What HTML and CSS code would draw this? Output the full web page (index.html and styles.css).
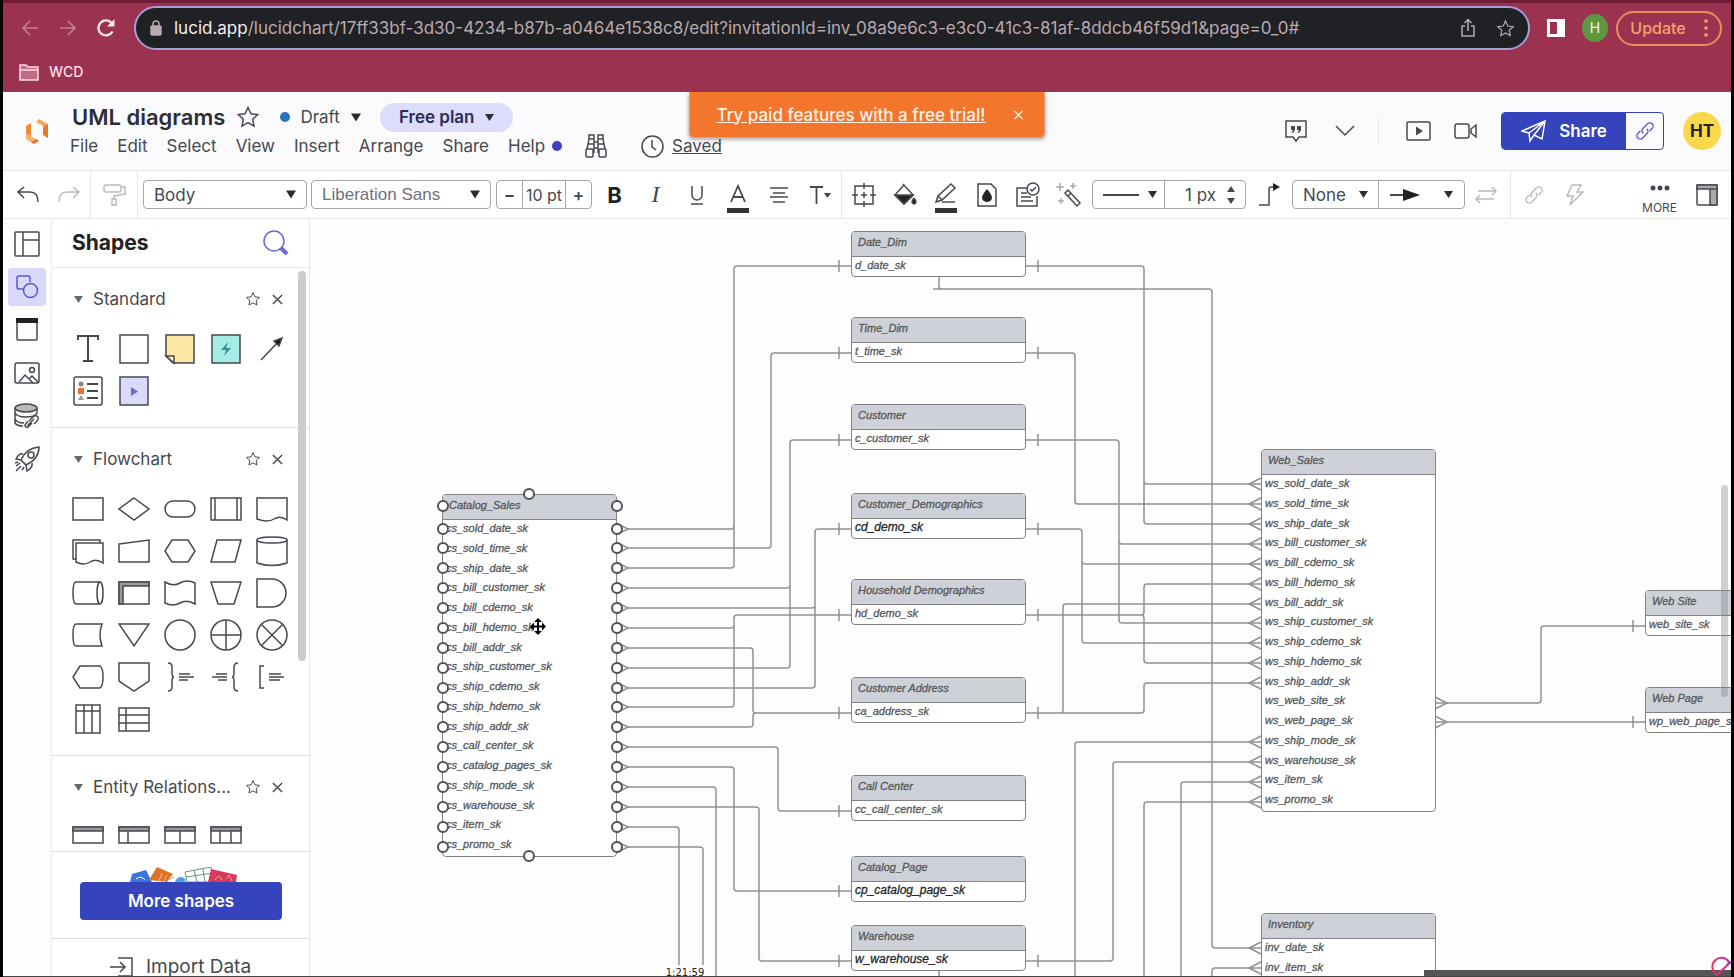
FILE: index.html
```html
<!DOCTYPE html>
<html lang="en">
<head>
<meta charset="utf-8">
<title>UML diagrams: Lucidchart</title>
<link rel="stylesheet" href="styles.css">
</head>
<body>
<svg class="defs" aria-hidden="true">
  <symbol id="star" viewBox="0 0 24 24"><path d="M12 2.500l2.900 6.300 6.800.8-5 4.700 1.300 6.800-6-3.400-6 3.400 1.300-6.800-5-4.700 6.800-.8z"/></symbol>
  <symbol id="cross" viewBox="0 0 12 12"><path d="M1 1l10 10M11 1L1 11"/></symbol>
  <symbol id="caret" viewBox="0 0 10 8"><path d="M0 0h10L5 8z" fill="currentColor" stroke="none"/></symbol>
  <symbol id="link" viewBox="0 0 24 24"><path d="M10 14.500c-1.800-1.800-1.600-4 0-5.600l4.500-4.500c1.600-1.600 4-1.600 5.300-.2 1.400 1.400 1.400 3.700-.2 5.300l-2.600 2.600M14 9.500c1.800 1.800 1.600 4 0 5.600l-4.500 4.500c-1.600 1.600-4 1.600-5.300.2-1.400-1.400-1.400-3.700.2-5.300l2.600-2.600"/></symbol>
</svg>

<div class="browser">
  <div class="navbar">
    <button class="nav dim" aria-label="Back"><svg width="18" height="16" viewBox="0 0 18 16"><path d="M17 8H2M9 1L2 8l7 7"/></svg></button>
    <button class="nav dim" aria-label="Forward"><svg width="18" height="16" viewBox="0 0 18 16"><path d="M1 8h15M9 1l7 7-7 7"/></svg></button>
    <button class="nav" aria-label="Reload"><svg width="20" height="20" viewBox="0 0 20 20"><path d="M16.500 13.500A7.500 7.500 0 1 1 16 5.500" stroke-width="2.400"/><path d="M18.500 1v7.500H11z" fill="currentColor" stroke="none"/></svg></button>
    <div class="omnibox">
      <svg class="lock" width="12" height="16" viewBox="0 0 12 16"><rect x="1" y="6" width="10" height="9" rx="1" fill="currentColor"/><path d="M3 6V4a3 3 0 0 1 6 0v2"/></svg>
      <label for="url">lucid.app</label>
      <input id="url" type="text" value="/lucidchart/17ff33bf-3d30-4234-b87b-a0464e1538c8/edit?invitationId=inv_08a9e6c3-e3c0-41c3-81af-8ddcb46f59d1&amp;page=0_0#">
      <button aria-label="Share page"><svg width="16" height="20" viewBox="0 0 16 20"><path d="M5 8H2v10h12V8h-3M8 13V2M4.500 5L8 1.500 11.500 5"/></svg></button>
      <button aria-label="Bookmark"><svg width="19" height="19"><use href="#star"/></svg></button>
    </div>
    <button class="sidepanel" aria-label="Side panel"><svg width="18" height="18" viewBox="0 0 18 18"><path fill="#fff" stroke="none" d="M0 0h18v18H0zM3 3v12h7V3z" fill-rule="evenodd"/></svg></button>
    <span class="profile">H</span>
    <button class="update">Update<svg width="4" height="18" viewBox="0 0 4 18" class="solid"><circle cx="2" cy="2" r="1.800"/><circle cx="2" cy="9" r="1.800"/><circle cx="2" cy="16" r="1.800"/></svg></button>
  </div>
  <div class="bookmarks">
    <a href="#"><svg width="20" height="18" viewBox="0 0 20 18"><path d="M1 16V2h6l2 2h10v13H1z" fill="#bf6c87"/><path d="M1 7h18" /></svg>WCD</a>
  </div>
</div>

<header class="apphead">
  <svg class="logo" width="24" height="26" viewBox="0 0 24 26"><path d="M1 7l5-3v13l-5-2z" fill="#f08a3c"/><path d="M1 15l5 2 6 4-3 4-8-5z" fill="#f7b36a"/><path d="M9 25l-3-2 6-3 2 2z" fill="#e8752a"/><path d="M11 3l3-3 9 5-2 4z" fill="#f7a95c"/><path d="M18 8l5-3v14l-5-3z" fill="#ec7628"/></svg>
  <div class="doc">
    <div class="titlerow">
      <h1>UML diagrams</h1>
      <button class="fav" aria-label="Favorite"><svg width="24" height="24"><use href="#star"/></svg></button>
      <button class="draft"><i class="dot"></i>Draft<svg class="car" width="10" height="9"><use href="#caret"/></svg></button>
      <button class="plan">Free plan<svg class="car" width="9" height="9"><use href="#caret"/></svg></button>
    </div>
    <nav class="menus">
      <button>File</button><button>Edit</button><button>Select</button><button>View</button><button>Insert</button><button>Arrange</button><button>Share</button><button class="help">Help<i class="dot"></i></button>
      <button class="find" aria-label="Find"><svg width="22" height="24" viewBox="0 0 22 24"><rect x="1" y="15" width="7" height="8" rx="1"/><rect x="14" y="15" width="7" height="8" rx="1"/><path d="M2 15L4 5h5v14M20 15L18 5h-5v14M4 5V1h5v4M13 5V1h5v4M9 8h4M9 14h4M3 10h6M13 10h6"/></svg></button>
      <span class="saved"><svg width="23" height="23" viewBox="0 0 23 23"><circle cx="11.500" cy="11.500" r="10.500"/><path d="M11 5v7l4 3"/></svg><a href="#">Saved</a></span>
    </nav>
  </div>
  <div class="actions">
    <button class="comments" aria-label="Comments"><svg width="24" height="24" viewBox="0 0 24 24"><path d="M2 2h20v16h-7l-3 4-3-4H2z"/><path d="M7 7h4v3q0 3-3 4l-.5-1q1.500-1 1.500-2H7zM13 7h4v3q0 3-3 4l-.5-1q1.500-1 1.500-2h-2z" fill="currentColor" stroke="none"/></svg></button>
    <button aria-label="Expand comments"><svg width="20" height="12" viewBox="0 0 20 12"><path d="M1 1l9 9 9-9"/></svg></button>
    <i class="vsep"></i>
    <button aria-label="Present"><svg width="25" height="20" viewBox="0 0 25 20"><rect x="1" y="1" width="23" height="18" rx="1"/><path d="M10 5.500v9l7-4.500z" fill="currentColor" stroke="none"/></svg></button>
    <button aria-label="Video call"><svg width="24" height="18" viewBox="0 0 24 18"><rect x="1" y="2" width="14" height="14" rx="2"/><path d="M17 7l5-4v12l-5-4z"/></svg></button>
    <div class="sharebox">
      <button class="share"><svg width="26" height="24" viewBox="0 0 26 24"><path d="M1 12L24 2l-3 18-8-4-4 6-1-8zM24 2L8 14M24 2L13 16M8 14l1 8"/></svg>Share</button>
      <button class="copy" aria-label="Copy link"><svg width="22" height="24"><use href="#link"/></svg></button>
    </div>
    <span class="avatar">HT</span>
  </div>
  <div class="banner"><a href="#">Try paid features with a free trial!</a><button aria-label="Dismiss"><svg width="10" height="10"><use href="#cross"/></svg></button></div>
</header>

<div class="toolbar">
  <button class="t" aria-label="Undo"><svg width="22" height="18" viewBox="0 0 22 18"><path d="M7 1L1 6l6 6M1 6h12q8 0 8 10"/></svg></button>
  <button class="t off" aria-label="Redo"><svg width="22" height="18" viewBox="0 0 22 18"><path d="M15 1l6 5-6 6M21 6H9Q1 6 1 16"/></svg></button>
  <i class="vsep"></i>
  <button class="t roller off" aria-label="Format painter"><svg width="23" height="24" viewBox="0 0 23 24"><rect x="1" y="2" width="17" height="7" rx="2"/><path d="M18 4h4v7l-11 2v4M9 16h4v6H9z"/></svg></button>
  <i class="vsep"></i>
  <div class="pick style"><select aria-label="Text style"><option>Body</option></select><svg class="car" width="10" height="9"><use href="#caret"/></svg></div>
  <div class="pick font"><select aria-label="Font"><option>Liberation Sans</option></select><svg class="car" width="10" height="9"><use href="#caret"/></svg></div>
  <div class="size"><button aria-label="Smaller">−</button><input aria-label="Font size" type="text" value="10 pt"><button aria-label="Larger">+</button></div>
  <button class="t bold">B</button>
  <button class="t ital">I</button>
  <button class="t" aria-label="Underline"><svg width="16" height="22" viewBox="0 0 16 22" stroke-width="1.800"><path d="M3 2v9a5 5 0 0 0 10 0V2M2 20h12"/></svg></button>
  <button class="t" aria-label="Text color"><svg width="22" height="36" viewBox="0 0 22 36"><path d="M4 25L11 9l7 16M7 20h8" stroke-width="1.800"/><path d="M0 31h22v5H0z" fill="#333" stroke="none"/></svg></button>
  <button class="t" aria-label="Align"><svg width="20" height="18" viewBox="0 0 20 18"><path d="M1 2h18M4 7h12M1 11h18M4 16h12"/></svg></button>
  <button class="t" aria-label="Text options"><svg width="22" height="20" viewBox="0 0 22 20"><path d="M1 2h13M7.500 2v17" stroke-width="1.800"/><path d="M15 8h7l-3.500 5z" fill="currentColor" stroke="none"/></svg></button>
  <i class="vsep"></i>
  <button class="t" aria-label="Frame"><svg width="24" height="24" viewBox="0 0 24 24"><rect x="3" y="3" width="18" height="18"/><path d="M12 0v6M12 18v6M0 12h6M18 12h6M9 12h6M12 9v6"/></svg></button>
  <button class="t" aria-label="Fill"><svg width="24" height="24" viewBox="0 0 24 24"><path d="M10 1l10 11-9 9-9-9 9-10"/><path d="M2 12h18l-9 9zM21 15q4 5 0 6-4-1 0-6" fill="#222"/></svg></button>
  <button class="t" aria-label="Line color"><svg width="24" height="36" viewBox="0 0 24 36"><path d="M2 25l2-6L17 7l4 4L8 23zM4 19l4 4M8 25h13"/><path d="M1 31h22v5H1z" fill="#333" stroke="none"/></svg></button>
  <button class="t" aria-label="Opacity"><svg width="20" height="24" viewBox="0 0 20 24"><path d="M1 1h13l5 5v17H1z"/><path d="M10 6q8 9 3 12-3 2-6 0-5-3 3-12" fill="#222" stroke="none"/></svg></button>
  <button class="t" aria-label="Rules"><svg width="24" height="26" viewBox="0 0 24 26"><path d="M12 6H1v18h20V14M5 11h6M5 15h10M5 19h12"/><circle cx="17" cy="7" r="6"/><path d="M14 7l2 2 4-4"/></svg></button>
  <button class="t" aria-label="Smart format"><svg width="26" height="26" viewBox="0 0 26 26"><path d="M9 11l3-3 12 13-3 3zM12 14l3-3"/><path d="M4 1v8M0 5h8M17 1v6M14 4h6M5 16v6M2 19h6" stroke="#aaa"/></svg></button>
  <div class="pair line"><button aria-label="Line style"><svg width="36" height="2"><path d="M0 1h36" stroke-width="2"/></svg><svg class="car" width="9" height="9"><use href="#caret"/></svg></button><label><input aria-label="Line width" type="text" value="1 px"><svg width="8" height="18" viewBox="0 0 8 18" class="solid"><path d="M0 6h8L4 0zM0 12h8l-4 6z"/></svg></label></div>
  <button class="t elbow" aria-label="Line shape"><svg width="21" height="24" viewBox="0 0 21 24"><path d="M0 22h10V6q0-2 2-2h3"/><path d="M14 0l7 4-7 4z" fill="#222" stroke="none"/></svg></button>
  <div class="pair ends"><div class="pick"><select aria-label="Line start"><option>None</option></select><svg class="car" width="9" height="9"><use href="#caret"/></svg></div><button aria-label="Line end"><svg width="30" height="12" viewBox="0 0 30 12"><path d="M0 6h16" stroke-width="2"/><path d="M13 0l17 6-17 6z" fill="#222" stroke="none"/></svg><svg class="car" width="9" height="9"><use href="#caret"/></svg></button></div>
  <button class="t off" aria-label="Swap ends"><svg width="22" height="16" viewBox="0 0 22 16"><path d="M3 4h18M17 0l4 4-4 4M19 12H1M5 8l-4 4 4 4"/></svg></button>
  <i class="vsep last"></i>
  <button class="t off" aria-label="Link"><svg width="22" height="22"><use href="#link"/></svg></button>
  <button class="t off" aria-label="Actions"><svg width="18" height="22" viewBox="0 0 18 22"><path d="M6 1h9l-4 7h6L4 21l3-9H1z"/></svg></button>
  <button class="more"><svg width="20" height="6" viewBox="0 0 20 6" class="solid"><circle cx="3" cy="3" r="2.500"/><circle cx="10" cy="3" r="2.500"/><circle cx="17" cy="3" r="2.500"/></svg>MORE</button>
  <button class="dock" aria-label="Toggle panel"><svg width="22" height="22" viewBox="0 0 22 22"><rect x="1" y="1" width="20" height="20" rx="1"/><path d="M1 1h20v4H1zM14 5h7v16h-7z" fill="#aaa"/></svg></button>
</div>

<main class="work">
  <nav class="rail">
    <button aria-label="Templates"><svg width="26" height="26" viewBox="0 0 26 26"><rect x="1" y="1" width="24" height="24" rx="1"/><path d="M9 1v24M9 9h16"/></svg></button>
    <button class="on" aria-label="Shapes"><svg width="24" height="24" viewBox="0 0 24 24"><path d="M8 14H4a2 2 0 0 1-2-2V3a2 2 0 0 1 2-2h9a2 2 0 0 1 2 2v4"/><circle cx="15.500" cy="15.500" r="7"/></svg></button>
    <button aria-label="Containers"><svg width="22" height="24" viewBox="0 0 22 24"><rect x="1" y="1" width="20" height="21" rx="1"/><path d="M0 0h22v5H0z" fill="#222" stroke="none"/></svg></button>
    <button aria-label="Images"><svg width="26" height="22" viewBox="0 0 26 22"><rect x="1" y="1" width="24" height="20" rx="2"/><circle cx="18" cy="8" r="2.500"/><path d="M5 20l6-7 8 8M15 17l3-3 6 6"/></svg></button>
    <button aria-label="Data"><svg width="26" height="26" viewBox="0 0 26 26"><ellipse cx="12" cy="5" rx="11" ry="4" fill="#bbb"/><path d="M1 5v5q2 4 11 4t11-4V5M1 10v6q2 4 9 4M1 16v4q2 3 8 3"/><path d="M15 18l5-5q3-1 4 1t-1 4l-3 3M20 16l-5 5q-2 2 0 3M18 20l-4 4q-3 1-3-2l3-4"/></svg></button>
    <button aria-label="What's new"><svg width="26" height="26" viewBox="0 0 26 26"><path d="M7 14Q12 2 25 1q0 12-13 18zM7 14l5 5"/><circle cx="17" cy="9" r="3"/><path d="M9 8q-4-1-7 5l5 1M18 17q1 4-5 8l-1-6M6 17l-4 3M7 20l-5 5M4 16l-3 1M10 21l-2 3"/></svg></button>
  </nav>

  <aside class="panel">
    <div class="phead"><h2>Shapes</h2><button aria-label="Search shapes"><svg width="26" height="26" viewBox="0 0 26 26"><circle cx="11" cy="11" r="10"/><path d="M18 18l6 6" stroke-width="4"/></svg></button></div>
    <div class="scroll">
      <section>
        <div class="shead"><svg class="car" width="9" height="7"><use href="#caret"/></svg><h3>Standard</h3><button aria-label="Favorite Standard"><svg width="16" height="16"><use href="#star"/></svg></button><button aria-label="Close Standard"><svg width="11" height="11"><use href="#cross"/></svg></button></div>
        <div class="shapes">
          <svg viewBox="0 0 32 32"><path d="M6 7V3h20v4M16 3v24M11 28h10" stroke-width="2"/></svg>
          <svg viewBox="0 0 32 32"><path d="M2 2h28v28H2z"/></svg>
          <svg viewBox="0 0 32 32"><path d="M2 2h28v28H9l-7-7z" fill="#fbe8a6"/><path d="M2 23h8v7z" fill="#fff4c4"/></svg>
          <svg viewBox="0 0 32 32"><path d="M2 2h28v28H2z" fill="#a5ece6"/><path d="M18 9l-7 8h5l-2 6 7-8h-5z" fill="#3c8f92" stroke="none"/></svg>
          <svg viewBox="0 0 32 32"><path d="M5 27L22 9"/><path d="M26 5l-3 8-5-5z" fill="#111"/></svg>
          <svg viewBox="0 0 32 32"><rect x="2" y="2" width="28" height="28" rx="2"/><path d="M15 9h11M15 16h11M15 23h11" stroke-width="2"/><circle cx="9" cy="9" r="2.500" fill="#888" stroke="none"/><path d="M6 13h6v6H6z" fill="#e8702c" stroke="none"/><path d="M9 20l3 5H6z" fill="#999" stroke="none"/></svg>
          <svg viewBox="0 0 32 32"><path d="M2 2h28v28H2z" fill="#dadafb"/><path d="M13 12v9l7-4.500z" fill="#6c6ae0" stroke="none"/></svg>
        </div>
      </section>
      <section>
        <div class="shead"><svg class="car" width="9" height="7"><use href="#caret"/></svg><h3>Flowchart</h3><button aria-label="Favorite Flowchart"><svg width="16" height="16"><use href="#star"/></svg></button><button aria-label="Close Flowchart"><svg width="11" height="11"><use href="#cross"/></svg></button></div>
        <div class="shapes">
          <svg viewBox="0 0 32 32"><path d="M1 5h30v22H1z"/></svg>
          <svg viewBox="0 0 32 32"><path d="M16 5l15 11-15 11L1 16z"/></svg>
          <svg viewBox="0 0 32 32"><rect x="1" y="8" width="30" height="16" rx="8"/></svg>
          <svg viewBox="0 0 32 32"><path d="M1 5h30v22H1zM5 5v22M27 5v22"/></svg>
          <svg viewBox="0 0 32 32"><path d="M1 5h30v22q-7-5-13-1t-17 0z"/></svg>
          <svg viewBox="0 0 32 32"><path d="M4 8h27v20q-7-5-13-1t-14 0zM4 24H1V5h27v3"/></svg>
          <svg viewBox="0 0 32 32"><path d="M1 9l30-4v22H1z"/></svg>
          <svg viewBox="0 0 32 32"><path d="M8 5h16l7 11-7 11H8L1 16z"/></svg>
          <svg viewBox="0 0 32 32"><path d="M7 5h24l-6 22H1z"/></svg>
          <svg viewBox="0 0 32 32"><ellipse cx="16" cy="5" rx="15" ry="3"/><path d="M1 5v23q15 5 30 0V5"/></svg>
          <svg viewBox="0 0 32 32"><path d="M28 5H4q-3 0-3 11t3 11h24"/><ellipse cx="28" cy="16" rx="3" ry="11"/></svg>
          <svg viewBox="0 0 32 32"><path d="M1 5h30v22H1z"/><path d="M1 5h30v4H5v18H1z" fill="#999"/></svg>
          <svg viewBox="0 0 32 32"><path d="M1 5q8 5 15 1t15 0v21q-8-5-15-1t-15 0z"/></svg>
          <svg viewBox="0 0 32 32"><path d="M1 5h30l-7 22H8z"/></svg>
          <svg viewBox="0 0 32 32"><path d="M1 2h15a14 14 0 0 1 0 28H1z"/></svg>
          <svg viewBox="0 0 32 32"><path d="M30 5H4q-3 0-3 11t3 11h26q-4-11 0-22z"/></svg>
          <svg viewBox="0 0 32 32"><path d="M1 5h30L16 27z"/></svg>
          <svg viewBox="0 0 32 32"><circle cx="16" cy="16" r="15"/></svg>
          <svg viewBox="0 0 32 32"><circle cx="16" cy="16" r="15"/><path d="M16 1v30M1 16h30"/></svg>
          <svg viewBox="0 0 32 32"><circle cx="16" cy="16" r="15"/><path d="M6 6l20 20M26 6L6 26"/></svg>
          <svg viewBox="0 0 32 32"><path d="M8 5h20q3 2 3 11t-3 11H8L1 16z"/></svg>
          <svg viewBox="0 0 32 32"><path d="M1 2h30v18L16 30 1 20z"/></svg>
          <svg viewBox="0 0 32 32"><path d="M4 2q4 0 4 4v6q0 4 2 4-2 0-2 4v6q0 4-4 4M15 13h11M15 16h15M15 19h9"/></svg>
          <svg viewBox="0 0 32 32"><path d="M28 2q-4 0-4 4v6q0 4-2 4 2 0 2 4v6q0 4 4 4M6 13h11M2 16h15M8 19h9"/></svg>
          <svg viewBox="0 0 32 32"><path d="M8 5H4v22h4M13 13h12M13 16h15M13 19h11"/></svg>
          <svg viewBox="0 0 32 32"><path d="M4 2h24v28H4zM4 8h24M12 2v28M20 2v28"/></svg>
          <svg viewBox="0 0 32 32"><path d="M1 5h30v23H1zM1 12h30M1 20h30M8 5v23"/></svg>
        </div>
      </section>
      <section class="er">
        <div class="shead"><svg class="car" width="9" height="7"><use href="#caret"/></svg><h3>Entity Relations...</h3><button aria-label="Favorite Entity Relationship"><svg width="16" height="16"><use href="#star"/></svg></button><button aria-label="Close Entity Relationship"><svg width="11" height="11"><use href="#cross"/></svg></button></div>
        <div class="shapes">
          <svg viewBox="0 0 32 32"><path d="M1 8h30v16H1z"/><path d="M1 8h30v4H1z" fill="#999"/></svg>
          <svg viewBox="0 0 32 32"><path d="M1 8h30v16H1zM10 12v12"/><path d="M1 8h30v4H1z" fill="#999"/></svg>
          <svg viewBox="0 0 32 32"><path d="M1 8h30v16H1zM16 12v12"/><path d="M1 8h30v4H1z" fill="#999"/></svg>
          <svg viewBox="0 0 32 32"><path d="M1 8h30v16H1zM10 12v12M21 12v12"/><path d="M1 8h30v4H1z" fill="#999"/></svg>
        </div>
      </section>
      <i class="thumb"></i>
    </div>
    <div class="moreshapes">
      <svg width="108" height="15" viewBox="0 0 108 15"><path d="M1 15l2-8 14-4 6 12z" fill="#3d73de"/><path d="M7 12q5-4 9 1" stroke="#fff"/><path d="M20 13L28 0l16 7-6 8z" fill="#dd7328"/><path d="M30 14l3-8M35 14l3-6" stroke="#f5c089"/><path d="M40 13l5-3M46 15q4-8 10-3v3z" stroke="#7ab8e0" fill="#3d9fe0"/><path d="M56 5l26-5 3 15H58zM65 3l3 12M74 2l2 13M57 10l27-4" stroke="#6c9080"/><path d="M82 2l26 6-1 7H79z" fill="#d83a5c"/><path d="M86 13q4-7 7 0M97 12l3-4 3 6" stroke="#f5a0b0"/></svg>
      <button>More shapes</button>
    </div>
    <button class="import"><svg width="23" height="22" viewBox="0 0 23 22"><path d="M8 2h14v18H8M0 11h15M10 6l5 5-5 5"/></svg>Import Data</button>
  </aside>

  <div class="canvas">
    <svg class="wires" width="1421" height="758" viewBox="310 219 1421 758">
      <path d="M628 529H731q3 0 3-3M628 548H768q3 0 3-3V356q0-3 3-3H852M628 568H731q3 0 3-3V269q0-3 3-3H852"/>
      <path d="M628 588H787q3 0 3-3M628 668H787q3 0 3-3V443q0-3 3-3H852"/>
      <path d="M628 608H812q3 0 3-3M628 688H812q3 0 3-3V532q0-3 3-3H852"/>
      <path d="M628 628H731q3 0 3-3M628 707H731q3 0 3-3V618q0-3 3-3H852"/>
      <path d="M628 648H750q3 0 3 3V710q0 3 3 3H852M628 727H750q3 0 3-3V716q0-3 3-3"/>
      <path d="M628 747H775q3 0 3 3V808q0 3 3 3H852"/>
      <path d="M628 767H731q3 0 3 3V888q0 3 3 3H852"/>
      <path d="M628 787H713q3 0 3 3V977"/>
      <path d="M628 807H756q3 0 3 3V958q0 3 3 3H852"/>
      <path d="M628 827H676q3 0 3 3V977M628 847H700q3 0 3 3V977"/>
      <path d="M1026 266H1141q3 0 3 3V481q0 3 3 3H1261M1144 481V521q0 3 3 3H1261"/>
      <path d="M939 276v10q0 3 3 3H1209q3 0 3 3V945q0 3 3 3H1261M933 289h12"/>
      <path d="M1026 353H1072q3 0 3 3V501q0 3 3 3H1261"/>
      <path d="M1026 440H1116q3 0 3 3V541q0 3 3 3H1261M1119 541V620q0 3 3 3H1261"/>
      <path d="M1026 529H1079q3 0 3 3V561q0 3 3 3H1261M1082 561V640q0 3 3 3H1261"/>
      <path d="M1026 615H1141q3 0 3-3V587q0-3 3-3H1261M1141 615q3 0 3 3V660q0 3 3 3H1261"/>
      <path d="M1026 713H1060q3 0 3-3V607q0-3 3-3H1261M1060 713H1141q3 0 3-3V686q0-3 3-3H1261"/>
      <path d="M1261 742H1078q-3 0-3 3V977M1026 961H1110q3 0 3-3V765q0-3 3-3H1261"/>
      <path d="M1261 782H1184q-3 0-3 3V977M1261 802H1147q-3 0-3 3V977M1261 968H1215q-3 0-3 3V977M939 971v6"/>
      <path d="M1435 703H1538q3 0 3-3V629q0-3 3-3H1646M1435 722H1646"/>
      <path class="tick" d="M839 260v12M839 347v12M839 434v12M839 523v12M839 609v12M839 707v12M839 805v12M839 885v12M839 955v12M1038 260v12M1038 347v12M1038 434v12M1038 523v12M1038 609v12M1038 707v12M1038 955v12M1633 620v12M1633 716v12"/>
      <g class="feet">
        <path d="M1261 478l-12 6 12 6M1261 498l-12 6 12 6M1261 518l-12 6 12 6M1261 538l-12 6 12 6M1261 558l-12 6 12 6M1261 578l-12 6 12 6M1261 598l-12 6 12 6M1261 617l-12 6 12 6M1261 637l-12 6 12 6M1261 657l-12 6 12 6M1261 677l-12 6 12 6M1261 736l-12 6 12 6M1261 756l-12 6 12 6M1261 776l-12 6 12 6M1261 796l-12 6 12 6M1261 942l-12 6 12 6M1261 962l-12 6 12 6M1435 697l12 6-12 6M1435 716l12 6-12 6"/>
        <path d="M616 523l12 6-12 6M616 542l12 6-12 6M616 562l12 6-12 6M616 582l12 6-12 6M616 602l12 6-12 6M616 622l12 6-12 6M616 642l12 6-12 6M616 662l12 6-12 6M616 682l12 6-12 6M616 701l12 6-12 6M616 721l12 6-12 6M616 741l12 6-12 6M616 761l12 6-12 6M616 781l12 6-12 6M616 801l12 6-12 6M616 821l12 6-12 6M616 841l12 6-12 6"/>
      </g>
    </svg>

    <div class="node mid n-date"><b>Date_Dim</b><ul><li>d_date_sk</li></ul></div>
    <div class="node mid n-time"><b>Time_Dim</b><ul><li>t_time_sk</li></ul></div>
    <div class="node mid n-cust"><b>Customer</b><ul><li>c_customer_sk</li></ul></div>
    <div class="node mid n-cdemo"><b>Customer_Demographics</b><ul class="dark"><li>cd_demo_sk</li></ul></div>
    <div class="node mid n-hdemo"><b>Household Demographics</b><ul><li>hd_demo_sk</li></ul></div>
    <div class="node mid n-addr"><b>Customer Address</b><ul><li>ca_address_sk</li></ul></div>
    <div class="node mid n-call"><b>Call Center</b><ul><li>cc_call_center_sk</li></ul></div>
    <div class="node mid n-page"><b>Catalog_Page</b><ul class="dark"><li>cp_catalog_page_sk</li></ul></div>
    <div class="node mid n-ware"><b>Warehouse</b><ul class="dark"><li>w_warehouse_sk</li></ul></div>
    <div class="node n-web"><b>Web_Sales</b><ul><li>ws_sold_date_sk</li><li>ws_sold_time_sk</li><li>ws_ship_date_sk</li><li>ws_bill_customer_sk</li><li>ws_bill_cdemo_sk</li><li>ws_bill_hdemo_sk</li><li>ws_bill_addr_sk</li><li>ws_ship_customer_sk</li><li>ws_ship_cdemo_sk</li><li>ws_ship_hdemo_sk</li><li>ws_ship_addr_sk</li><li>ws_web_site_sk</li><li>ws_web_page_sk</li><li>ws_ship_mode_sk</li><li>ws_warehouse_sk</li><li>ws_item_sk</li><li>ws_promo_sk</li></ul></div>
    <div class="node n-inv"><b>Inventory</b><ul><li>inv_date_sk</li><li>inv_item_sk</li><li></li></ul></div>
    <div class="node n-site"><b>Web Site</b><ul><li>web_site_sk</li></ul></div>
    <div class="node n-wpage"><b>Web Page</b><ul><li>wp_web_page_sk</li></ul></div>
    <div class="node n-cat"><b>Catalog_Sales</b><ul><li>cs_sold_date_sk</li><li>cs_sold_time_sk</li><li>cs_ship_date_sk</li><li>cs_bill_customer_sk</li><li>cs_bill_cdemo_sk</li><li>cs_bill_hdemo_sk</li><li>cs_bill_addr_sk</li><li>cs_ship_customer_sk</li><li>cs_ship_cdemo_sk</li><li>cs_ship_hdemo_sk</li><li>cs_ship_addr_sk</li><li>cs_call_center_sk</li><li>cs_catalog_pages_sk</li><li>cs_ship_mode_sk</li><li>cs_warehouse_sk</li><li>cs_item_sk</li><li>cs_promo_sk</li></ul></div>

    <svg class="wires handles" width="1421" height="758" viewBox="310 219 1421 758">
      <defs>
        <g id="pair"><circle cx="443" r="5"/><circle cx="617" r="5"/></g>
      </defs>
      <circle cx="529" cy="494" r="5"/><circle cx="529" cy="856" r="5"/>
      <use href="#pair" y="506"/><use href="#pair" y="529"/><use href="#pair" y="548"/><use href="#pair" y="568"/><use href="#pair" y="588"/><use href="#pair" y="608"/><use href="#pair" y="628"/><use href="#pair" y="648"/><use href="#pair" y="668"/><use href="#pair" y="688"/><use href="#pair" y="707"/><use href="#pair" y="727"/><use href="#pair" y="747"/><use href="#pair" y="767"/><use href="#pair" y="787"/><use href="#pair" y="807"/><use href="#pair" y="827"/><use href="#pair" y="847"/>
      <g class="move"><path d="M538 621v11M532 626.500h12" class="bar"/><path d="M538 618l4 4h-8zM538 635l4-4h-8zM530 626.500l4-4v8zM546 626.500l-4-4v8z"/></g>
    </svg>
    <i class="vthumb"></i>
    <i class="hthumb"></i>
    <span class="clock">1:21:59</span>
    <svg class="widget" width="24" height="21" viewBox="0 0 24 21"><defs><linearGradient id="g"><stop stop-color="#f0305c"/><stop offset="1" stop-color="#a040c0"/></linearGradient></defs><path d="M6 19A9 9 0 1 1 19 7Q17 12 10 17l-4 4M10 17L24 4" stroke="url(#g)" stroke-width="2"/></svg>
  </div>
</main>
</body>
</html>
```

FILE: styles.css
```css
* { box-sizing: border-box; }
body {
  margin: 0;
  height: 100vh;
  display: flex;
  flex-direction: column;
  overflow: hidden;
  background: #fff;
  border: solid #000;
  border-width: 0 3px;
  color: #45494f;
  font: 17px/24px Inter, "Liberation Sans", sans-serif;
}
button, input, select { font: inherit; color: inherit; background: none; border: 0; padding: 0; margin: 0; }
button { display: flex; align-items: center; justify-content: center; white-space: nowrap; }
input { min-width: 0; outline: 0; }
a { color: inherit; }
h1, h2, h3, ul { margin: 0; padding: 0; }
svg { display: block; flex: none; fill: none; stroke: currentColor; stroke-width: 1.5; }
svg.solid { fill: currentColor; stroke: none; }
.defs { position: absolute; width: 0; height: 0; }
.car { color: #2a2d33; }
.vsep { flex: none; width: 1px; background: #e6e7ec; }

/* browser chrome */
.browser { flex: none; height: 92px; background: #9b3350; border-top: 3px solid #701c35; color: #fbdde6; }
.navbar { display: flex; align-items: center; height: 50px; padding: 0 9px 0 17px; }
.nav { width: 20px; height: 20px; margin-right: 18px; color: #ffe6ee; stroke-width: 2; }
.nav.dim { color: #c97f96; }
.omnibox {
  flex: 1;
  display: flex;
  align-items: center;
  height: 44px;
  padding: 0 13px 0 14px;
  border: 2px solid #a59fd6;
  border-radius: 22px;
  background: #202124;
  font-size: 17px;
  color: #b9a9b0;
}
.omnibox label { margin-left: 12px; color: #f4eef0; }
.omnibox input { flex: 1; }
.omnibox button { margin-left: 20px; }
.sidepanel { margin: 0 17px; }
.profile { width: 26px; height: 28px; border-radius: 50%; background: #60963f; color: #f3f3e6; font-size: 14px; line-height: 28px; text-align: center; }
.update { height: 35px; width: 106px; margin-left: 8px; gap: 18px; border: 2px solid #ea8e5c; border-radius: 18px; color: #f5a468; font-size: 16px; font-weight: 500; }
.bookmarks { display: flex; padding: 7px 16px; font-size: 14px; font-weight: 500; }
.bookmarks a { display: flex; align-items: center; gap: 10px; text-decoration: none; }

/* document header */
.apphead { position: relative; flex: none; display: flex; height: 78px; padding: 10px 10px 0 22px; background: #fbfbfe; }
.logo { margin: 17px 21px 0 0; stroke: none; }
.titlerow { display: flex; align-items: center; height: 30px; }
h1 { font-size: 22px; line-height: 30px; font-weight: 600; color: #2b2e35; margin-left: 2px; }
.fav { margin-left: 11px; }
.dot { width: 10px; height: 10px; border-radius: 50%; background: #2474bd; }
.draft { margin-left: 20px; }
.draft .dot { margin-right: 10px; }
.draft .car { margin-left: 11px; }
.plan { height: 29px; margin-left: 19px; padding: 0 19px; border-radius: 15px; background: #dedcfb; color: #2c2c58; font-weight: 600; }
.plan .car { margin-left: 10px; }
.menus { display: flex; align-items: center; height: 28px; gap: 19px; }
.help { gap: 7px; }
.help .dot { background: #3f3fc4; }
.find { margin-left: 4px; }
.saved { display: flex; align-items: center; gap: 8px; margin-left: 15px; }
.actions { display: flex; align-items: center; height: 58px; margin-left: auto; }
.actions > button { margin-right: 23px; }
.actions > .comments { margin-right: 27px; }
.actions .vsep { height: 26px; margin-right: 27px; }
.sharebox { display: flex; height: 38px; border: 1px solid #3543bd; border-radius: 4px; overflow: hidden; }
.share { width: 124px; gap: 12px; background: #3543bd; color: #fff; font-weight: 600; }
.copy { width: 37px; color: #5a58c8; }
.avatar { width: 38px; height: 38px; margin-left: 19px; border-radius: 50%; background: #fbd84b; color: #222; font-weight: 700; line-height: 38px; text-align: center; }
.banner {
  position: absolute;
  top: 0;
  left: 50%;
  transform: translateX(-50%);
  display: flex;
  align-items: center;
  gap: 28px;
  height: 45px;
  padding: 0 21px 0 27px;
  border-radius: 0 0 4px 4px;
  background: #f4762d;
  color: #fff2e8;
  font-weight: 500;
  white-space: nowrap;
  box-shadow: 0 2px 4px #0006;
}

/* formatting toolbar */
.toolbar { flex: none; display: flex; align-items: center; height: 49px; padding: 0 13px 0 4px; border: solid #e8e8ec; border-width: 1px 0; background: #fff; }
.toolbar .vsep { height: 47px; margin: 0 1px; }
.toolbar .last { margin: 0 2px 0 4px; }
.t { flex: none; width: 41px; height: 40px; }
.off { color: #b9bbc0; }
.roller { width: 44px; }
.bold { font-size: 22px; font-weight: 700; color: #222; }
.ital { font: italic 24px "Liberation Serif", serif; }
.pick { position: relative; display: flex; align-items: center; }
.pick select { width: 100%; height: 100%; padding: 0 28px 0 10px; appearance: none; }
.pick .car { position: absolute; right: 10px; pointer-events: none; }
.style, .font { height: 29px; border: 1px solid #a4a6ab; border-radius: 4px; }
.style { width: 164px; margin-left: 4px; }
.font { width: 180px; margin: 0 5px 0 4px; font-family: "Liberation Sans", sans-serif; color: #6e7178; }
.size, .pair { display: flex; height: 29px; border: 1px solid #a4a6ab; border-radius: 4px; }
.size { width: 96px; margin-right: 2px; }
.size button { width: 25px; font-weight: 600; }
.size input { flex: 1; width: 44px; text-align: center; border: solid #a4a6ab; border-width: 0 1px; font-size: 16px; }
.line { width: 154px; margin-left: 3px; }
.line button { width: 73px; gap: 9px; padding-left: 3px; border-right: 1px solid #a4a6ab; }
.line label { flex: 1; display: flex; align-items: center; padding-right: 10px; }
.line input { width: 62px; padding-left: 20px; }
.elbow { width: 46px; }
.ends { width: 173px; }
.ends .pick { width: 86px; border-right: 1px solid #a4a6ab; }
.ends button { flex: 1; gap: 24px; }
.more { flex-direction: column; gap: 9px; margin-left: auto; font-size: 12px; line-height: 16px; padding-top: 12px; }
.dock { margin-left: 19px; }

/* side rail */
.work { flex: 1; display: flex; min-height: 0; border-bottom: 1px solid #444; }
.rail { flex: none; width: 49px; display: flex; flex-direction: column; align-items: center; gap: 5px; padding-top: 6px; border-right: 1px solid #ececf2; background: #fdfdfe; }
.rail button { width: 38px; height: 38px; border-radius: 4px; }
.rail .on { background: #d9d8fa; color: #5a58d0; }

/* shape panel */
.panel { flex: none; width: 258px; display: flex; flex-direction: column; border-right: 1px solid #e6e6ec; background: #fff; }
.phead { flex: none; display: flex; align-items: center; justify-content: space-between; height: 49px; padding: 0 20px; border-bottom: 1px solid #e6e6ec; }
.phead button { color: #6a68d8; }
h2 { font-size: 21px; line-height: 30px; color: #222; }
.scroll { position: relative; flex: 1; min-height: 0; overflow: hidden; }
section { padding: 19px 11px 15px 13px; border-bottom: 1px solid #dcdde2; }
.shead { display: flex; align-items: center; height: 24px; margin-bottom: 17px; padding: 0 15px 0 9px; }
.shead .car { color: #666; }
.shead h3 { flex: 1; margin-left: 10px; font-size: 17px; line-height: 24px; font-weight: 400; }
.shead button { margin-left: 11px; }
.shapes { display: grid; grid-template-columns: repeat(5, 46px); grid-auto-rows: 42px; place-items: center; }
.shapes svg { width: 32px; height: 32px; }
.er .shapes { margin-top: -2px; }
.thumb { position: absolute; top: 3px; right: 3px; width: 8px; height: 390px; border-radius: 4px; background: #cbccd0; }
.moreshapes { flex: none; height: 88px; padding: 15px 27px 0 28px; border-top: 1px solid #dcdde2; border-bottom: 1px solid #dcdde2; }
.moreshapes svg { margin: 0 0 0 49px; stroke-width: 1; stroke: none; }
.moreshapes button { width: 100%; height: 38px; border-radius: 4px; background: #3543bd; color: #fff; font-weight: 600; }
.import { flex: none; height: 37px; gap: 13px; padding: 18px 0 0; font-size: 19px; overflow: hidden; }

/* diagram canvas */
.canvas { position: relative; flex: 1; overflow: hidden; background: #fdfdfd; }
.wires { position: absolute; top: 0; left: 0; stroke: #8f9194; }
.handles { stroke: #505254; stroke-width: 2; fill: #fff; }
.move { fill: #000; stroke: none; }
.move .bar { stroke: #000; stroke-width: 2; }
.node {
  position: absolute;
  width: 175px;
  display: flex;
  flex-direction: column;
  border: 1px solid #808387;
  border-radius: 4px;
  background: #fff;
  overflow: hidden;
  font: italic 11px/16px "Liberation Sans", sans-serif;
  color: #55585c;
}
.node b { flex: none; height: 25px; padding: 2px 6px; font-weight: 400; background: #ced1d7; border-bottom: 1px solid #808387; -webkit-text-stroke: 0.3px; }
.node ul { flex: 1; display: grid; grid-auto-rows: 1fr; list-style: none; }
.node li { padding: 0 3px; -webkit-text-stroke: 0.3px; }
.node .dark { color: #26282b; font-size: 12px; }
.mid { left: 541px; height: 46px; }
.n-date { top: 12px; }
.n-time { top: 98px; }
.n-cust { top: 185px; }
.n-cdemo { top: 274px; }
.n-hdemo { top: 360px; }
.n-addr { top: 458px; }
.n-call { top: 556px; }
.n-page { top: 637px; }
.n-ware { top: 706px; }
.n-web { left: 951px; top: 230px; height: 363px; }
.n-inv { left: 951px; top: 694px; height: 86px; }
.n-site { left: 1335px; top: 371px; height: 46px; }
.n-wpage { left: 1335px; top: 468px; height: 46px; }
.n-cat { left: 132px; top: 275px; height: 363px; }
.vthumb { position: absolute; right: 3px; top: 266px; width: 7px; height: 212px; border-radius: 4px; background: #80829060; }
.hthumb { position: absolute; right: 0; bottom: 0; width: 307px; height: 6px; background: #555; }
.clock { position: absolute; left: 354px; bottom: -5px; width: 42px; background: #fff; color: #222; font: 10px/16px "DejaVu Sans", sans-serif; text-align: center; white-space: nowrap; }
.widget { position: absolute; right: -3px; bottom: 0; }
```
